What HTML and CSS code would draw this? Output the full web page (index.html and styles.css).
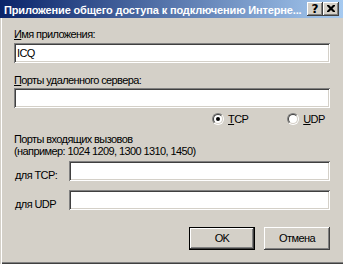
FILE: index.html
```html
<!DOCTYPE html>
<html lang="ru">
<head>
<meta charset="utf-8">
<title>Приложение общего доступа</title>
<link rel="stylesheet" href="styles.css">
</head>
<body>
<div class="window">
  <div class="titlebar">
    <span class="title">Приложение общего доступа к подключению Интерне...</span>
    <div class="tbtns">
      <span class="tbtn help">?</span>
      <span class="tbtn close"><svg width="8" height="7" viewBox="0 0 8 7"><path d="M0 0h2l2 2 2-2h2v1l-2.5 2.5L8 6v1H6L4 5 2 7H0V6l2.5-2.5L0 1z" fill="#000"/></svg></span>
    </div>
  </div>
  <div class="body">
    <div class="label l1"><span class="u">И</span>мя приложения:</div>
    <div class="field f1">ICQ</div>
    <div class="label l2"><span class="u">П</span>орты удаленного сервера:</div>
    <div class="field f2"></div>
    <div class="radios">
      <div class="radio"><span class="rc"><span class="rci"><span class="dot"></span></span></span><span class="rt"><span class="u">T</span>CP</span></div>
      <div class="radio"><span class="rc"><span class="rci"></span></span><span class="rt"><span class="u">U</span>DP</span></div>
    </div>
    <div class="note">Порты входящих вызовов<br>(например: 1024 1209, 1300 1310, 1450)</div>
    <div class="row r1"><span class="rl">для TCP:</span><div class="field grow"></div></div>
    <div class="row r2"><span class="rl">для UDP</span><div class="field grow"></div></div>
    <div class="buttons">
      <div class="btn default"><span>OK</span></div>
      <div class="btn"><span>Отмена</span></div>
    </div>
  </div>
</div>
</body>
</html>
```

FILE: styles.css
```css
html, body {
  margin: 0;
  padding: 0;
  background: #d4d0c8;
}
.window {
  width: 343px;
  height: 264px;
  overflow: hidden;
  background: #d4d0c8;
  font-family: "Liberation Sans", Arial, sans-serif;
  font-size: 11px;
  letter-spacing: -0.6px;
  color: #000;
  display: flex;
  flex-direction: column;
}
.titlebar {
  height: 18px;
  flex: none;
  display: flex;
  align-items: flex-start;
  background: linear-gradient(to right, #0a246a 0%, #a6caf0 100%);
  color: #fff;
}
.title {
  font-weight: bold;
  font-size: 11px;
  letter-spacing: -0.15px;
  line-height: 13px;
  padding: 4px 0 0 4px;
  white-space: nowrap;
  flex: 1;
  overflow: hidden;
}
.tbtns {
  display: flex;
  padding: 2px 4px 0 0;
}
.tbtn {
  width: 16px;
  height: 14px;
  box-sizing: border-box;
  background: #d4d0c8;
  box-shadow: inset -1px -1px 0 #404040, inset 1px 1px 0 #ffffff, inset -2px -2px 0 #808080;
  color: #000;
  display: flex;
  align-items: center;
  justify-content: center;
  letter-spacing: 0;
}
.help {
  font-weight: bold;
  font-size: 12px;
  line-height: 14px;
  font-family: "DejaVu Sans", sans-serif;
}
.close svg { display: block; margin: 0 1px 1px 0; }
.body {
  flex: 1;
  display: flex;
  flex-direction: column;
  padding: 10px 13px 0 14px;
  box-shadow: inset 1px 0 0 #d4d0c8, inset 2px 0 0 #ffffff, inset 0 -1px 0 #404040, inset 0 -2px 0 #808080;
}
.label {
  line-height: 13px;
  white-space: nowrap;
}
.u { text-decoration: underline; }
.l2 { margin-top: 11px; }
.field {
  height: 20px;
  box-sizing: border-box;
  background: #fff;
  box-shadow: inset 1px 1px 0 #808080, inset -1px -1px 0 #ffffff, inset 2px 2px 0 #404040, inset -2px -2px 0 #d4d0c8;
  line-height: 20px;
  padding-left: 3px;
}
.f1 { margin-top: 2px; }
.f2 { margin-top: 1px; }
.radios {
  margin-top: 5px;
  display: flex;
  padding-left: 198px;
  gap: 39px;
  height: 13px;
}
.radio {
  display: flex;
  align-items: flex-start;
  gap: 4px;
  line-height: 13px;
}
.rc {
  width: 12px;
  height: 12px;
  box-sizing: border-box;
  border-radius: 50%;
  border: 1px solid;
  border-color: #808080 #ffffff #ffffff #808080;
  display: flex;
}
.rci {
  flex: 1;
  border-radius: 50%;
  border: 1px solid;
  border-color: #404040 #d4d0c8 #d4d0c8 #404040;
  background: #fff;
  display: flex;
  align-items: center;
  justify-content: center;
}
.dot {
  width: 4px;
  height: 4px;
  border-radius: 50%;
  background: #000;
}
.note {
  margin-top: 7px;
  line-height: 12px;
  white-space: nowrap;
}
.row {
  display: flex;
  align-items: flex-end;
}
.r1 { margin-top: 4px; }
.r2 { margin-top: 9px; }
.rl {
  width: 55px;
  flex: none;
  line-height: 13px;
  padding-left: 1px;
  box-sizing: border-box;
  white-space: nowrap;
  margin-bottom: -1px;
}
.grow { flex: 1; }
.buttons {
  margin-top: 17px;
  display: flex;
  justify-content: flex-end;
  gap: 9px;
}
.btn {
  width: 66px;
  height: 23px;
  box-sizing: border-box;
  background: #d4d0c8;
  box-shadow: inset -1px -1px 0 #404040, inset 1px 1px 0 #ffffff, inset -2px -2px 0 #808080;
  display: flex;
  align-items: center;
  justify-content: center;
  line-height: 13px;
}
.btn.default {
  border: 1px solid #000;
}
```
